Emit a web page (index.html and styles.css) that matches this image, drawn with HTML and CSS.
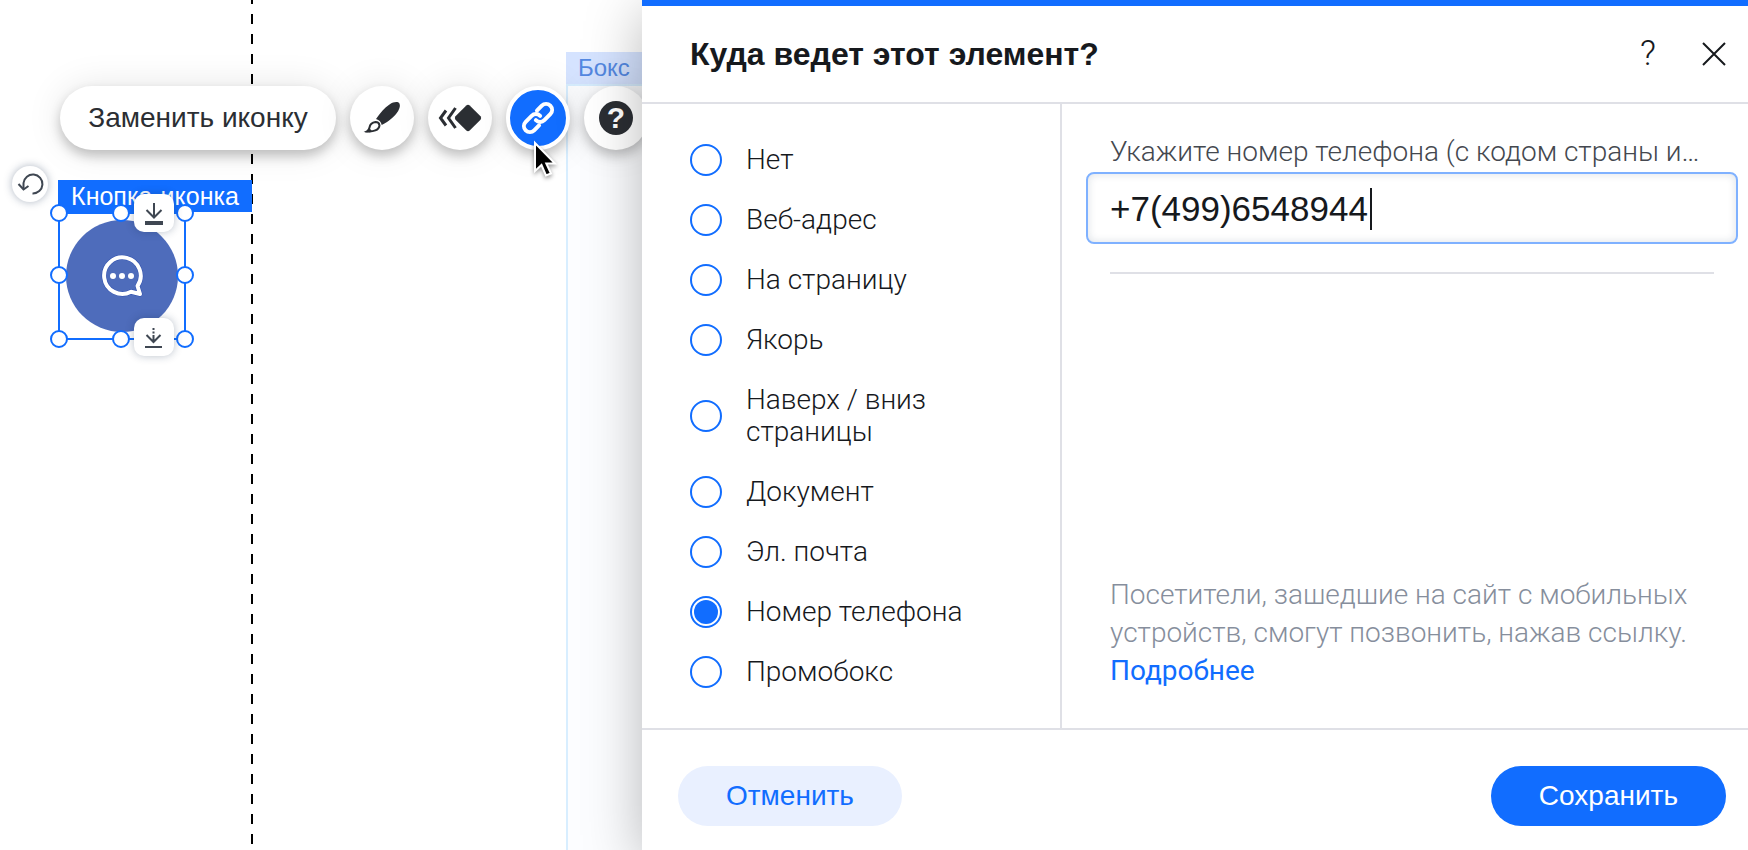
FILE: index.html
```html
<!DOCTYPE html>
<html lang="ru">
<head>
    <meta charset="UTF-8">
    <meta name="viewport" content="width=device-width, initial-scale=1.0">
    <title>Куда ведет этот элемент?</title>
    <link rel="stylesheet" href="styles.css">
</head>
<body>
    <div class="editor">
        <main class="canvas">
            <div class="guide"></div>

            <div class="box-area">
                <div class="box-label">Бокс</div>
                <div class="box-body"></div>
            </div>

            <div class="toolbar">
                <button class="tool-text" type="button">Заменить иконку</button>
                <button class="tool" type="button" aria-label="Дизайн">
                    <svg width="64" height="64" viewBox="0 0 64 64">
                        <path fill="#2b2e33" d="M48.500 16.600c2 1.400 1.800 5-.3 8.400-3.500 5.500-8.700 10-16.500 14-.6-3-2.200-5-5.700-6 4-6 8.500-11.300 13.500-14.500 3.500-2.200 6.800-3 9-1.900z"/>
                        <path fill="none" stroke="#2b2e33" stroke-width="2" d="M25.500 36c-4 .5-5.500 2.500-6 5.500-.3 2-1 3-2.500 3.800 6 .6 12-1 12.500-6-.3-2-1.800-3.300-4-3.300z"/>
                        <path fill="#2b2e33" d="M14.800 46.300c3-.5 4.200-2.500 4.400-4.500l3 3.800c-2 .9-5 1.100-7.400.7z"/>
                    </svg>
                </button>
                <button class="tool" type="button" aria-label="Анимация">
                    <svg width="64" height="64" viewBox="0 0 64 64">
                        <path fill="#2b2e33" d="M38.300 19.500q1.700-1.400 3.400 0l10.800 10.800q1.400 1.700 0 3.400l-10.800 10.800q-1.700 1.400-3.400 0l-10.800-10.800q-1.400-1.700 0-3.400z"/>
                        <path fill="none" stroke="#2b2e33" stroke-width="3" d="M18 24.500L12.500 32l5.500 7.500M27.500 22l-7 10 7 10"/>
                    </svg>
                </button>
                <button class="tool tool-active" type="button" aria-label="Ссылка">
                    <svg width="56" height="56" viewBox="0 0 56 56">
                        <g transform="rotate(-45 28 28)" fill="none" stroke="#fff" stroke-width="4" stroke-linecap="round">
                            <path d="M23.500 34H16.600a6 6 0 0 1 0-12h8.400a6 6 0 0 1 6 6"/>
                            <path d="M32.500 22H39.400a6 6 0 0 1 0 12h-8.400a6 6 0 0 1-6-6"/>
                        </g>
                    </svg>
                </button>
                <button class="tool" type="button" aria-label="Справка">
                    <span class="tool-help">?</span>
                </button>
            </div>

            <div class="rotate">
                <svg width="36" height="36" viewBox="0 0 36 36" fill="none" stroke="#3f4752" stroke-width="2">
                    <path d="M11.500 22.500V17a9.500 9.500 0 1 1 9 10.500"/>
                    <path d="M6.500 18l5 5.500 5-3.500"/>
                </svg>
            </div>

            <div class="element-label">Кнопка-иконка</div>
            <div class="selection">
                <div class="icon-button">
                    <svg width="48" height="48" viewBox="0 0 48 48">
                        <g fill="none" stroke-linejoin="round">
                            <path stroke="#2e4fae" stroke-width="5" d="M42 42l-2.500-8A18.300 18.300 0 1 0 33 39.800z"/>
                            <path stroke="#fff" stroke-width="4" d="M42 42l-2.500-8A18.300 18.300 0 1 0 33 39.800z"/>
                        </g>
                        <g fill="#fff">
                            <circle cx="15" cy="24" r="3"/>
                            <circle cx="24" cy="24" r="3"/>
                            <circle cx="33" cy="24" r="3"/>
                        </g>
                    </svg>
                </div>
                <i class="handle top left"></i>
                <i class="handle top center"></i>
                <i class="handle top right"></i>
                <i class="handle middle left"></i>
                <i class="handle middle right"></i>
                <i class="handle bottom left"></i>
                <i class="handle bottom center"></i>
                <i class="handle bottom right"></i>
                <div class="stretch stretch-top">
                    <svg width="40" height="38" viewBox="0 0 40 38" fill="none" stroke="#3f4752" stroke-width="2">
                        <path d="M20 9v14M12.500 16l7.500 7.500 7.500-7.500"/>
                        <path stroke-width="4" d="M11 29h18"/>
                    </svg>
                </div>
                <div class="stretch stretch-bottom">
                    <svg width="40" height="38" viewBox="0 0 40 38" fill="none" stroke="#3f4752" stroke-width="2">
                        <path d="M19.500 10v2M19.500 13.500v2M19.500 17v7M12.500 17l7 7 7-7M11 29h17"/>
                    </svg>
                </div>
            </div>

            <svg class="cursor" width="30" height="42" viewBox="0 0 30 42">
                <path fill="#000" stroke="#fff" stroke-width="2" d="M3 3v28l6.500-6 4.500 10.500 5-2-4.700-10H23z"/>
            </svg>
        </main>

        <form class="panel">
            <header class="panel-header">
                <h1>Куда ведет этот элемент?</h1>
                <button class="help" type="button" aria-label="Помощь">?</button>
                <button class="close" type="button" aria-label="Закрыть">
                    <svg width="24" height="24" viewBox="0 0 24 24" fill="none" stroke="#16191d" stroke-width="2">
                        <path d="M1 1l22 22M23 1L1 23"/>
                    </svg>
                </button>
            </header>

            <div class="panel-body">
                <div class="options">
                    <label class="option"><input type="radio" name="link"><span>Нет</span></label>
                    <label class="option"><input type="radio" name="link"><span>Веб-адрес</span></label>
                    <label class="option"><input type="radio" name="link"><span>На страницу</span></label>
                    <label class="option"><input type="radio" name="link"><span>Якорь</span></label>
                    <label class="option"><input type="radio" name="link"><span>Наверх / вниз страницы</span></label>
                    <label class="option"><input type="radio" name="link"><span>Документ</span></label>
                    <label class="option"><input type="radio" name="link"><span>Эл. почта</span></label>
                    <label class="option"><input type="radio" name="link" checked><span>Номер телефона</span></label>
                    <label class="option"><input type="radio" name="link"><span>Промобокс</span></label>
                </div>

                <div class="details">
                    <label class="phone-label" for="phone">Укажите номер телефона (с кодом страны и…</label>
                    <div class="phone-field">
                        <input class="phone" id="phone" type="tel" value="+7(499)6548944">
                        <span class="caret"></span>
                    </div>
                    <hr class="divider">
                    <p class="note">Посетители, зашедшие на сайт с мобильных устройств, смогут позвонить, нажав ссылку. <a href="#">Подробнее</a></p>
                </div>
            </div>

            <footer class="panel-footer">
                <button class="button cancel" type="button">Отменить</button>
                <button class="button save" type="submit">Сохранить</button>
            </footer>
        </form>
    </div>
</body>
</html>
```
FILE: styles.css
```css
* {
    box-sizing: border-box;
}
body {
    margin: 0;
    background-color: #fff;
    color: #16191d;
    font-family: "Liberation Sans", Arial, sans-serif;
    font-size: 28px;
    line-height: 32px;
}
button {
    padding: 0;
    border: none;
    background: none;
    color: inherit;
    font: inherit;
    cursor: pointer;
}
svg {
    display: block;
}
.editor {
    display: flex;
    min-height: 100vh;
    overflow: hidden;
}

/* canvas */
.canvas {
    position: relative;
    flex: 0 0 642px;
}
.guide {
    position: absolute;
    top: 0;
    bottom: 0;
    left: 251px;
    width: 2px;
    background: repeating-linear-gradient(#000 0 4px, transparent 4px 14px, #000 14px 20px);
}
.box-area {
    position: absolute;
    top: 52px;
    right: 0;
    bottom: 0;
    left: 566px;
    display: flex;
    flex-direction: column;
}
.box-label {
    padding-left: 12px;
    background-color: #d5e3ff;
    color: #5489e2;
    font-size: 24px;
}
.box-body {
    flex: 1;
    border-top: 2px solid #d8eeff;
    border-left: 2px solid #d8eeff;
    background-color: #fcfdff;
}
.toolbar {
    position: absolute;
    top: 86px;
    left: 60px;
    display: flex;
    gap: 14px;
}
.tool,
.tool-text {
    flex: none;
    height: 64px;
    border-radius: 32px;
    background-color: #fff;
    box-shadow: 0 6px 12px rgba(0, 0, 0, 0.22), 0 0 36px rgba(0, 0, 0, 0.1);
    color: #2b2e33;
}
.tool-text {
    width: 276px;
    white-space: nowrap;
}
.tool {
    display: flex;
    align-items: center;
    justify-content: center;
    width: 64px;
}
.tool-active {
    border: 4px solid #fff;
    background-color: #116dff;
}
.tool-help {
    width: 34px;
    height: 34px;
    border-radius: 50%;
    background-color: #2b2e33;
    color: #fff;
    font-size: 30px;
    font-weight: bold;
    line-height: 34px;
}
.rotate {
    position: absolute;
    top: 166px;
    left: 12px;
    border-radius: 50%;
    background-color: #fff;
    box-shadow: 0 0 8px rgba(22, 45, 80, 0.35);
}
.element-label {
    position: absolute;
    top: 180px;
    left: 58px;
    width: 194px;
    background-color: #116dff;
    color: #fff;
    font-size: 25px;
    text-align: center;
    white-space: nowrap;
}
.selection {
    position: absolute;
    top: 212px;
    left: 58px;
    width: 128px;
    height: 128px;
    border: 2px solid #116dff;
    padding: 6px;
}
.icon-button {
    display: flex;
    align-items: center;
    justify-content: center;
    height: 112px;
    border-radius: 50%;
    background-color: #4e6cbb;
}
.handle {
    position: absolute;
    width: 18px;
    height: 18px;
    border: 2px solid #116dff;
    border-radius: 50%;
    background-color: #fff;
}
.top {
    top: -10px;
}
.middle {
    top: 52px;
}
.bottom {
    bottom: -10px;
}
.left {
    left: -10px;
}
.center {
    left: 52px;
}
.right {
    right: -10px;
}
.stretch {
    position: absolute;
    left: 74px;
    border-radius: 10px;
    background-color: #fff;
    box-shadow: 0 0 8px rgba(22, 45, 80, 0.3);
}
.stretch-top {
    top: -20px;
}
.stretch-bottom {
    top: 104px;
}
.cursor {
    position: absolute;
    top: 140px;
    left: 532px;
    filter: drop-shadow(0 2px 2px rgba(0, 0, 0, 0.4));
}

/* link panel */
.panel {
    position: relative;
    flex: 1;
    display: flex;
    flex-direction: column;
    min-width: 0;
    border-top: 6px solid #116dff;
    background-color: #fff;
    box-shadow: 0 12px 54px rgba(0, 0, 0, 0.28);
}
.panel-header {
    display: flex;
    align-items: center;
    height: 98px;
    padding: 0 22px 0 48px;
    border-bottom: 2px solid #dfe0e6;
}
.panel-header h1 {
    flex: 1;
    margin: 0;
    font-size: 32px;
    font-weight: bold;
}
.help {
    width: 32px;
    margin-right: 38px;
    font-family: Roboto, sans-serif;
    font-size: 35px;
    font-weight: 300;
}
.panel-body {
    flex: 1;
    display: flex;
}
.options {
    flex: 0 0 420px;
    padding: 26px 92px 26px 48px;
    border-right: 2px solid #dfe0e6;
    font-family: Roboto, sans-serif;
    font-weight: 300;
}
.option {
    display: flex;
    align-items: center;
    gap: 24px;
    padding: 14px 0;
    cursor: pointer;
}
.option input {
    flex: none;
    appearance: none;
    width: 32px;
    height: 32px;
    margin: 0;
    border: 2px solid #116dff;
    border-radius: 50%;
    background-color: #fff;
}
.option input:checked {
    padding: 2px;
    background-color: #116dff;
    background-clip: content-box;
}
.details {
    flex: 1;
    display: flex;
    flex-direction: column;
    min-width: 0;
    padding: 32px 34px 26px 48px;
    font-family: Roboto, sans-serif;
    font-weight: 300;
}
.phone-label {
    color: #44484f;
    white-space: nowrap;
}
.phone-field {
    position: relative;
    margin: 4px -24px 0;
}
.phone {
    display: block;
    width: 100%;
    height: 72px;
    padding: 2px 22px 0;
    border: 2px solid #7fb1ff;
    border-radius: 8px;
    outline: none;
    background-color: #fff;
    box-shadow: inset 0 0 8px rgba(22, 45, 80, 0.15);
    color: #16191d;
    font-family: "Liberation Sans", Arial, sans-serif;
    font-size: 35px;
}
.caret {
    position: absolute;
    top: 16px;
    left: 284px;
    width: 2px;
    height: 42px;
    background-color: #16191d;
}
.divider {
    width: 100%;
    margin: 28px 0 0;
    border: none;
    border-top: 2px solid #dfe0e6;
}
.note {
    margin: auto 0 12px;
    color: #868e9c;
    line-height: 38px;
}
.note a {
    color: #116dff;
    font-weight: 400;
    text-decoration: none;
}
.panel-footer {
    display: flex;
    justify-content: space-between;
    padding: 36px 22px 24px 36px;
    border-top: 2px solid #dfe0e6;
}
.button {
    height: 60px;
    padding: 0 48px;
    border-radius: 30px;
}
.cancel {
    background-color: #e9f0ff;
    color: #116dff;
}
.save {
    background-color: #116dff;
    color: #fff;
}
```
